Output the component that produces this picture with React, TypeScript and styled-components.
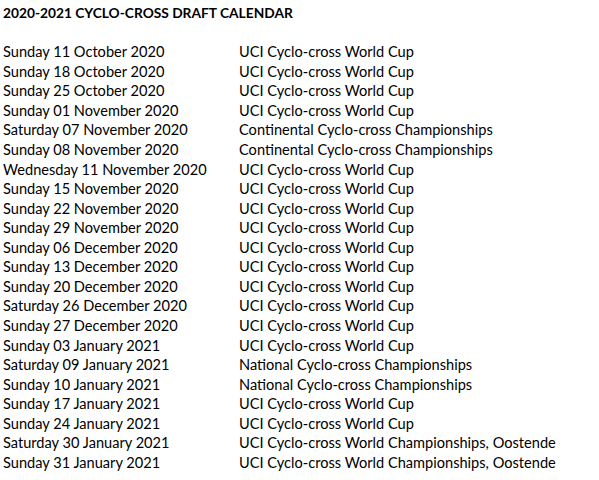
import styled, { createGlobalStyle } from "styled-components";
import { Fragment } from "react";

const GlobalStyle = createGlobalStyle`
  html, body {
    margin: 0;
    padding: 0;
    background: #ffffff;
  }
`;

const Sheet = styled.div`
  display: grid;
  grid-template-columns: 236px auto;
  grid-auto-rows: 19.57px;
  padding: 3px 0 0 3px;
  font-family: Lato, "Open Sans", sans-serif;
  font-size: 14.6px;
  color: #000000;
`;

const Title = styled.div`
  grid-column: 1 / span 2;
  font-weight: bold;
  font-size: 13.75px;
  line-height: 19.57px;
`;

const Cell = styled.div`
  line-height: 19.57px;
  white-space: nowrap;
`;

const Spacer = styled.div`
  grid-column: 1 / span 2;
`;

const WC = "UCI Cyclo-cross World Cup";
const CONT = "Continental Cyclo-cross Championships";
const NAT = "National Cyclo-cross Championships";
const WORLDS = "UCI Cyclo-cross World Championships, Oostende";

const rows: [string, string][] = [
  ["Sunday 11 October 2020", WC],
  ["Sunday 18 October 2020", WC],
  ["Sunday 25 October 2020", WC],
  ["Sunday 01 November 2020", WC],
  ["Saturday 07 November 2020", CONT],
  ["Sunday 08 November 2020", CONT],
  ["Wednesday 11 November 2020", WC],
  ["Sunday 15 November 2020", WC],
  ["Sunday 22 November 2020", WC],
  ["Sunday 29 November 2020", WC],
  ["Sunday 06 December 2020", WC],
  ["Sunday 13 December 2020", WC],
  ["Sunday 20 December 2020", WC],
  ["Saturday 26 December 2020", WC],
  ["Sunday 27 December 2020", WC],
  ["Sunday 03 January 2021", WC],
  ["Saturday 09 January 2021", NAT],
  ["Sunday 10 January 2021", NAT],
  ["Sunday 17 January 2021", WC],
  ["Sunday 24 January 2021", WC],
  ["Saturday 30 January 2021", WORLDS],
  ["Sunday 31 January 2021", WORLDS],
];

function App(): JSX.Element {
  return (
    <>
      <GlobalStyle />
      <Sheet>
        <Title>2020-2021 CYCLO-CROSS DRAFT CALENDAR</Title>
        <Spacer />
        {rows.map(([date, race]) => (
          <Fragment key={date}>
            <Cell>{date}</Cell>
            <Cell>{race}</Cell>
          </Fragment>
        ))}
      </Sheet>
    </>
  );
}

export default App;
